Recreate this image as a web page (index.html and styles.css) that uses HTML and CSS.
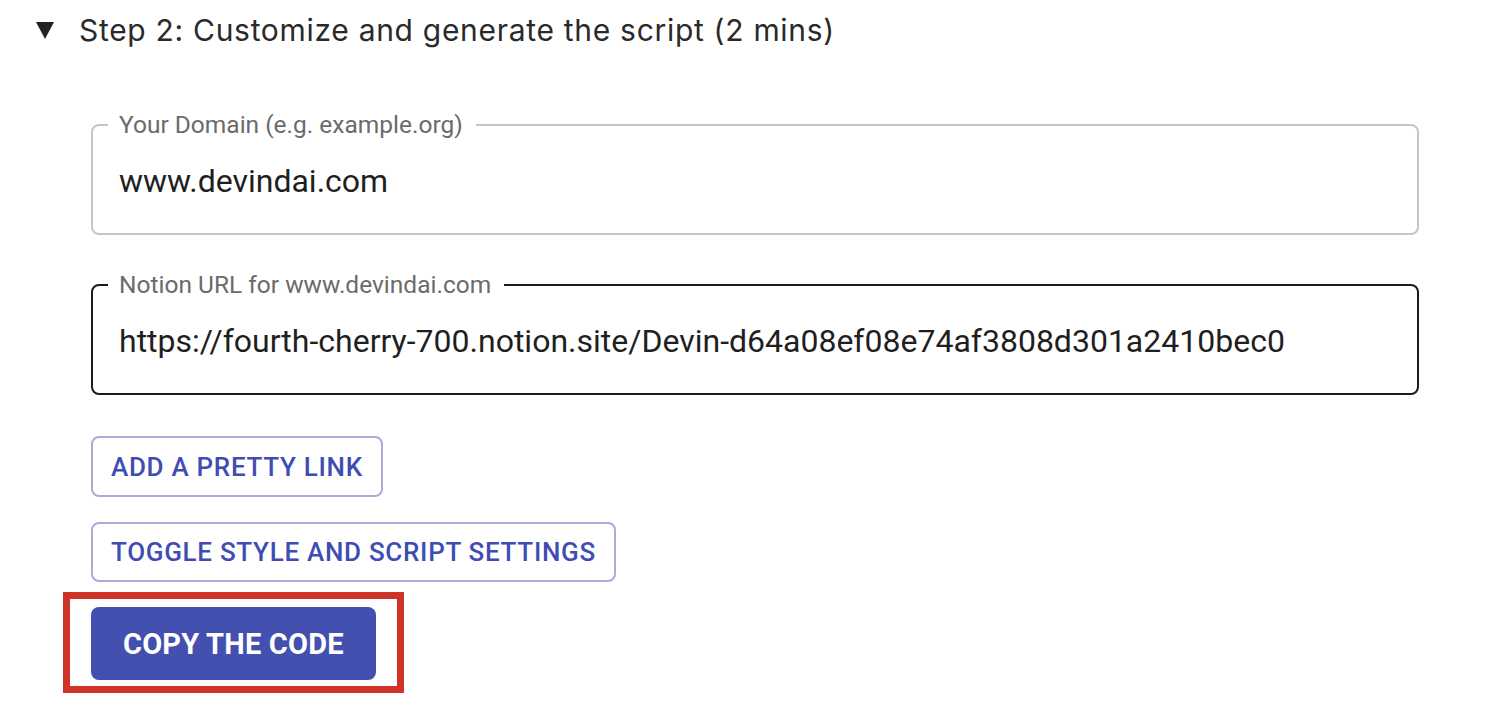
FILE: index.html
```html
<!DOCTYPE html>
<html lang="en">
<head>
<meta charset="utf-8">
<title>Step 2</title>
<link rel="stylesheet" href="styles.css">
</head>
<body>
<details class="step" open>
  <summary class="step-title"><span class="caret"></span><span class="step-text">Step 2: Customize and generate the script (2 mins)</span></summary>
  <div class="form">
    <fieldset class="field">
      <legend class="field-label">Your Domain (e.g. example.org)</legend>
      <input class="field-input" type="text" value="www.devindai.com">
    </fieldset>
    <fieldset class="field field-focused">
      <legend class="field-label">Notion URL for www.devindai.com</legend>
      <input class="field-input" type="text" value="https://fourth-cherry-700.notion.site/Devin-d64a08ef08e74af3808d301a2410bec0">
    </fieldset>
    <div class="actions">
      <button class="btn btn-outline btn-1">ADD A PRETTY LINK</button>
      <button class="btn btn-outline btn-2">TOGGLE STYLE AND SCRIPT SETTINGS</button>
      <div class="highlight">
        <button class="btn btn-primary">COPY THE CODE</button>
      </div>
    </div>
  </div>
</details>
</body>
</html>
```

FILE: styles.css
```css
* { box-sizing: border-box; }
html, body { margin: 0; padding: 0; background: #ffffff; }
body { width: 1508px; height: 712px; overflow: hidden; font-family: Roboto, "Liberation Sans", sans-serif; }

.step { padding: 0; }
.step-title {
  list-style: none;
  display: flex;
  align-items: center;
  height: 60px;
  padding-left: 36px;
  cursor: pointer;
}
.step-title::-webkit-details-marker { display: none; }
.caret {
  width: 0; height: 0;
  border-left: 9px solid transparent;
  border-right: 9px solid transparent;
  border-top: 17px solid #222;
  margin-right: 25px;
  margin-top: 1px;
}
.step-text {
  font-family: Inter, "Noto Sans", sans-serif;
  font-size: 30px;
  color: #2a2a2a;
  letter-spacing: 0.7px;
}

.form {
  margin: 51px 0 0 91px;
  width: 1328px;
  display: flex;
  flex-direction: column;
}
.field {
  display: block;
  margin: 0;
  padding: 0 24px 0 26px;
  border: 2px solid #c6c6c6;
  border-radius: 8px;
  height: 124px;
}
.field-focused { border-color: #1c1c1c; margin-top: 36px; }
.field-label {
  margin-left: -11px;
  padding: 0 13px 0 11px;
  font-size: 24.5px;
  line-height: 28px;
  color: #6b6b6b;
}
.field-input {
  display: block;
  border: none;
  outline: none;
  padding: 0;
  margin: 24px 0 0 0;
  width: 100%;
  height: 36px;
  line-height: 36px;
  font-family: Roboto, "Liberation Sans", sans-serif;
  font-size: 32px;
  color: #1f1f1f;
  background: transparent;
}

.actions {
  margin-top: 41px;
  display: flex;
  flex-direction: column;
  align-items: flex-start;
}
.btn {
  font-family: Roboto, "Liberation Sans", sans-serif;
  font-weight: 500;
  border-radius: 8px;
  cursor: pointer;
}
.btn-outline {
  height: 61px;
  padding: 0 18px;
  background: #fff;
  border: 2px solid #a9abd9;
  color: #3f4db3;
  font-size: 26px;
  letter-spacing: 0.7px;
}
.btn-2 { margin-top: 25px; height: 60px; }
.highlight {
  margin: 10px 0 0 -28px;
  border: 7px solid #cf3226;
  padding: 8px 21px 6px 21px;
}
.btn-primary {
  height: 73px;
  padding: 0 32px;
  border: none;
  background: #4350b0;
  color: #fff;
  font-size: 29px;
  font-weight: 700;
  letter-spacing: 0.2px;
}
```
